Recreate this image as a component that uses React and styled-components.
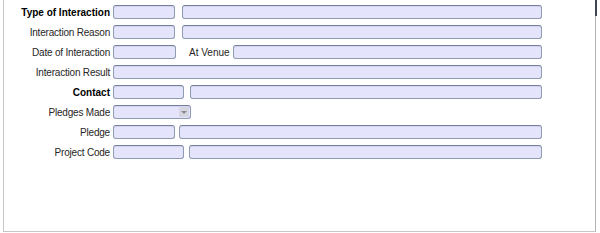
import React from "react";
import styled, { createGlobalStyle } from "styled-components";

const GlobalStyle = createGlobalStyle`
  html, body {
    margin: 0;
    padding: 0;
    background: #fff;
  }
  body {
    font-family: "Liberation Sans", Arial, sans-serif;
    font-size: 10px;
    color: #111;
  }
`;

const Frame = styled.div`
  position: relative;
  box-sizing: border-box;
  margin-left: 3px;
  width: 593px;
  height: 232px;
  padding-top: 2px;
  border-left: 1px solid #c6c6c6;
  border-right: 1px solid #b4b4b4;
  border-bottom: 1px solid #c6c6c6;
`;

const ScrollCap = styled.div`
  position: absolute;
  top: 0;
  right: -2px;
  width: 2px;
  height: 16px;
  background: #3e4656;
`;

const Row = styled.div`
  display: flex;
  align-items: center;
  height: 20px;
  padding-right: 53px;
`;

const Label = styled.label`
  flex: none;
  width: 106px;
  margin-right: 3px;
  text-align: right;
  font-weight: ${(p) => (p.$bold ? "bold" : "normal")};
  letter-spacing: ${(p) => (p.$bold ? "0" : "-0.2px")};
  color: ${(p) => (p.$bold ? "#000" : "#262626")};
  white-space: nowrap;
`;

const Field = styled.div`
  box-sizing: border-box;
  height: 14px;
  flex: ${(p) => (p.$w ? "none" : "1")};
  width: ${(p) => (p.$w ? `${p.$w}px` : "auto")};
  margin-left: ${(p) => p.$ml || 0}px;
  background: #e4e4fc;
  border: 1px solid #8f9bb0;
  border-top-color: #75819a;
  border-radius: 3px;
  box-shadow: inset 0 1px 0 #d4d4f0;
`;

const Select = styled(Field)`
  display: flex;
  justify-content: flex-end;
  padding: 1px;
`;

const Arrow = styled.span`
  width: 10px;
  height: 100%;
  display: flex;
  align-items: center;
  justify-content: center;
  background: #d6d6e2;
  border-radius: 1px;

  &::after {
    content: "";
    border-left: 3px solid transparent;
    border-right: 3px solid transparent;
    border-top: 3px solid #8a8a8a;
  }
`;

const InlineLabel = styled.span`
  margin-left: 13px;
  margin-right: 3px;
  color: #262626;
  white-space: nowrap;
`;

export default function App() {
  return (
    <>
      <GlobalStyle />
      <Frame>
        <ScrollCap />
        <Row>
          <Label $bold>Type of Interaction</Label>
          <Field $w={62} />
          <Field $ml={7} />
        </Row>
        <Row>
          <Label>Interaction Reason</Label>
          <Field $w={62} />
          <Field $ml={7} />
        </Row>
        <Row>
          <Label>Date of Interaction</Label>
          <Field $w={63} />
          <InlineLabel>At Venue</InlineLabel>
          <Field />
        </Row>
        <Row>
          <Label>Interaction Result</Label>
          <Field />
        </Row>
        <Row>
          <Label $bold>Contact</Label>
          <Field $w={71} />
          <Field $ml={6} />
        </Row>
        <Row>
          <Label>Pledges Made</Label>
          <Select as="div" $w={78}>
            <Arrow />
          </Select>
        </Row>
        <Row>
          <Label>Pledge</Label>
          <Field $w={62} />
          <Field $ml={4} />
        </Row>
        <Row>
          <Label>Project Code</Label>
          <Field $w={71} />
          <Field $ml={5} />
        </Row>
      </Frame>
    </>
  );
}
